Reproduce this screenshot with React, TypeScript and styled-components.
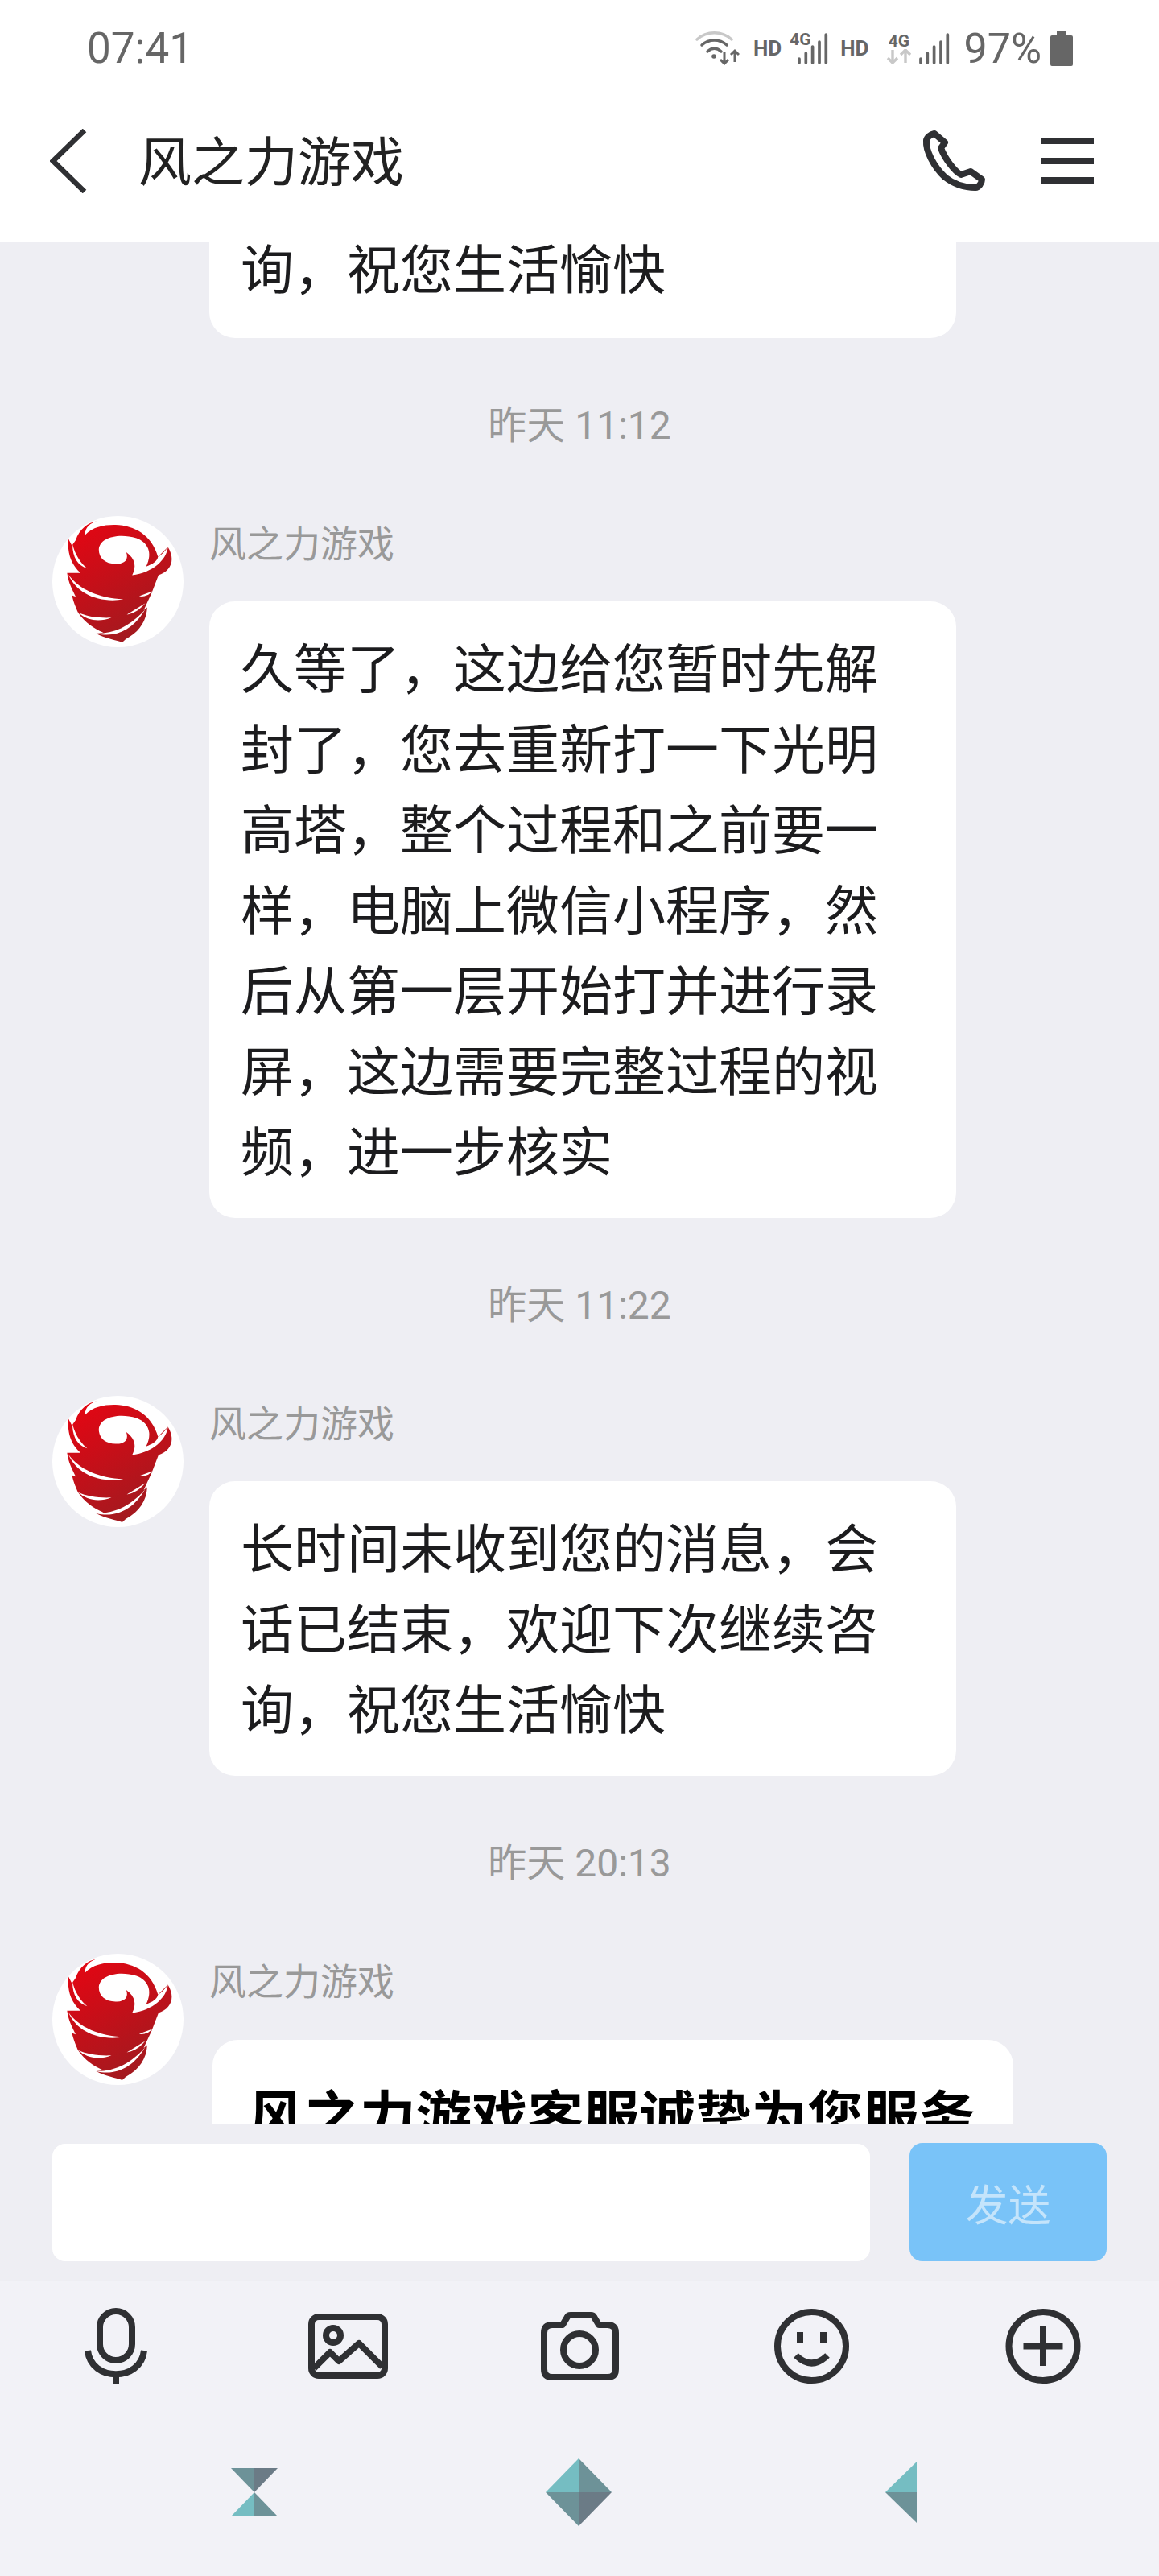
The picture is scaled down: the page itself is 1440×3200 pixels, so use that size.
import React from 'react';
import styled, { createGlobalStyle } from 'styled-components';

const FONT = `Roboto, "Noto Sans CJK SC", "Noto Sans", sans-serif`;
const ICON = '#2f3033';

const GlobalStyle = createGlobalStyle`
	html, body {
		margin: 0;
		padding: 0;
		background: #eeeef3;
	}
	* {
		box-sizing: border-box;
	}
`;

const Tornado = () => (
	<svg width="163" height="163" viewBox="75 60 488 488">
		<defs>
			<linearGradient id="swirl" gradientUnits="userSpaceOnUse" x1="170" y1="100" x2="420" y2="520">
				<stop offset="0" stopColor="#e30613" />
				<stop offset="1" stopColor="#9e1b20" />
			</linearGradient>
		</defs>
		<circle cx="319" cy="304" r="244" fill="#fff" />
		<path
			d="M245 78C205 85 175 110 162 150L148 170L135 145C130 200 145 240 180 272L130 272C135 310 150 335 162 360L148 355C155 385 165 405 170 418C195 455 230 480 265 493L238 497C270 515 310 520 335 530L348 518C400 490 425 450 428 400L415 410L445 345L470 280C515 265 535 225 505 175L468 212C445 130 380 95 310 93C270 92 225 100 197 130C195 105 215 85 245 78Z"
			fill="url(#swirl)"
		/>
		<g fill="#fff">
			<path d="M248 185C250 140 320 122 388 142C430 158 450 195 424 248C445 240 465 230 468 212C480 205 495 190 505 175C500 222 450 270 372 280C388 250 385 220 350 195C360 222 345 240 310 238C272 238 248 216 248 185Z" />
			<path d="M150 165C160 205 180 235 205 255C170 245 150 215 150 165Z" />
			<path d="M135 278C175 335 250 365 340 370C250 385 165 350 135 278Z" />
			<path d="M398 358L447 340C435 354 415 362 398 358Z" />
			<path d="M352 427L420 385C402 407 380 422 352 427Z" />
			<path d="M170 418C205 435 250 440 295 438C250 455 205 450 170 418Z" />
			<path d="M238 497C310 498 370 465 420 408C378 480 315 515 238 497Z" />
		</g>
	</svg>
);

const WifiIcon = () => (
	<svg width="55" height="42" viewBox="0 0 55 42" fill="none" strokeLinecap="round">
		<path d="M2 10C14 -1 33 -1 45 10" stroke="#c8c8c8" strokeWidth="3.5" />
		<path d="M8 17C17 9 30 9 39 17" stroke="#666" strokeWidth="3.5" />
		<path d="M15 25C20 20 27 20 32 25" stroke="#666" strokeWidth="3.5" />
		<circle cx="23" cy="31" r="2.8" fill="#666" />
		<path d="M36 26V40M31 35L36 40L41 35" stroke="#666" strokeWidth="3" strokeLinecap="butt" />
		<path d="M49 38V24M44 29L49 24L54 29" stroke="#666" strokeWidth="3" strokeLinecap="butt" />
	</svg>
);

const Bars = () => (
	<svg width="38" height="39" viewBox="0 0 38 39" stroke="#666" strokeWidth="3.7" strokeLinecap="round">
		<path d="M2 32V37M10.3 25V37M18.6 17V37M27 11V37M35.3 2V37" />
	</svg>
);

const ArrowPair = () => (
	<svg width="31" height="18" viewBox="0 0 31 18" fill="none" stroke="#c8c8c8" strokeWidth="3.4">
		<path d="M8 1V17M2 11L8 17L14 11" />
		<path d="M24 17V1M18 7L24 1L30 7" />
	</svg>
);

const BatteryIcon = () => (
	<svg width="28" height="43" viewBox="0 0 28 43">
		<path d="M8 0H20V5H26Q28 5 28 7V41Q28 43 26 43H2Q0 43 0 41V7Q0 5 2 5H8Z" fill="#666" />
	</svg>
);

const CallIcon = () => (
	<svg width="80" height="78" viewBox="0 0 80 78" fill="none" stroke={ICON} strokeWidth="8" strokeLinejoin="round">
		<path d="M15 5C10 6 5 10 5 14C4 26 14 46 28 59C38 67 52 72 66 72C70 72 74 66 74 62L60 52L48 56C40 52 28 36 23 23L28 16Z" />
	</svg>
);

const MicIcon = () => (
	<svg width="78" height="94" viewBox="0 0 78 94" fill="none" stroke={ICON} strokeWidth="8">
		<rect x="19" y="4" width="40" height="61" rx="20" />
		<path d="M4 53C8 92 70 92 74 53" />
		<path d="M39 80V94" />
	</svg>
);

const ImageIcon = () => (
	<svg width="99" height="81" viewBox="0 0 99 81" fill="none" stroke={ICON} strokeWidth="8">
		<rect x="4" y="4" width="91" height="73" rx="9" />
		<circle cx="31" cy="27" r="9" />
		<path d="M7 68L27 48L38 59L63 37L92 66" strokeLinejoin="round" />
	</svg>
);

const CameraIcon = () => (
	<svg width="97" height="85" viewBox="0 0 97 85" fill="none" stroke={ICON} strokeWidth="8" strokeLinejoin="round">
		<path d="M14 16H27L33 6Q34 4 37 4H62Q65 4 66 6L72 16H83Q93 16 93 26V71Q93 81 83 81H14Q4 81 4 71V26Q4 16 14 16Z" />
		<circle cx="48" cy="47" r="20" />
	</svg>
);

const SmileIcon = () => (
	<svg width="93" height="93" viewBox="0 0 93 93" fill="none" stroke={ICON} strokeWidth="8">
		<circle cx="46.5" cy="46.5" r="42.5" />
		<path d="M32 29V43M61 29V43" />
		<path d="M27 58Q46.5 77 66 58" />
	</svg>
);

const PlusIcon = () => (
	<svg width="94" height="93" viewBox="0 0 94 93" fill="none" stroke={ICON} strokeWidth="8">
		<circle cx="47" cy="46.5" r="42.5" />
		<path d="M47 22V71M22.5 46.5H71.5" />
	</svg>
);

const Hourglass = () => (
	<svg width="58" height="60" viewBox="0 0 58 60">
		<path d="M0 0H29V30Z" fill="#6d9298" />
		<path d="M58 0H29V30Z" fill="#6b7b86" />
		<path d="M0 60H29V30Z" fill="#75bdc2" />
		<path d="M58 60H29V30Z" fill="#6d9298" />
	</svg>
);

const Diamond = () => (
	<svg width="82" height="84" viewBox="0 0 82 84">
		<path d="M41 0V42H0Z" fill="#75bdc2" />
		<path d="M41 0V42H82Z" fill="#6d9298" />
		<path d="M41 84V42H0Z" fill="#6d9298" />
		<path d="M41 84V42H82Z" fill="#6b7b86" />
	</svg>
);

const HalfDiamond = () => (
	<svg width="39" height="76" viewBox="0 0 39 76">
		<path d="M39 0V38H0Z" fill="#75bdc2" />
		<path d="M39 76V38H0Z" fill="#6d9298" />
	</svg>
);

const Stamp: React.FC<{ time: string }> = ({ time }) => <TimeLabel>昨天 {time}</TimeLabel>;

const App: React.FC = () => (
	<Page>
		<GlobalStyle />
		<Top>
			<StatusBar>
				<Clock>07:41</Clock>
				<StatusIcons>
					<WifiIcon />
					<Hd $left={17}>HD</Hd>
					<Signal>
						<SmallG>4G</SmallG>
						<Bars />
					</Signal>
					<Hd $left={15}>HD</Hd>
					<NetStack>
						<SmallG>4G</SmallG>
						<ArrowPair />
					</NetStack>
					<Bars />
					<Percent>97%</Percent>
					<BatteryIcon />
				</StatusIcons>
			</StatusBar>
			<NavBar>
				<BackButton>
					<svg width="46" height="80" viewBox="0 0 46 80" fill="none" stroke={ICON} strokeWidth="6.5">
						<path d="M43 2L4 40L43 78" />
					</svg>
				</BackButton>
				<Title>风之力游戏</Title>
				<NavActions>
					<CallIcon />
					<Burger>
						<span />
						<span />
						<span />
					</Burger>
				</NavActions>
			</NavBar>
		</Top>

		<Chat>
			<Scroller>
				<ClippedRow>
					<Bubble $clipped>询，祝您生活愉快</Bubble>
				</ClippedRow>
				<Stamp time="11:12" />
				<Row>
					<Tornado />
					<Message>
						<Name>风之力游戏</Name>
						<Bubble>
							久等了，这边给您暂时先解封了，您去重新打一下光明高塔，整个过程和之前要一样，电脑上微信小程序，然后从第一层开始打并进行录屏，这边需要完整过程的视频，进一步核实
						</Bubble>
					</Message>
				</Row>
				<Stamp time="11:22" />
				<Row>
					<Tornado />
					<Message>
						<Name>风之力游戏</Name>
						<Bubble>长时间未收到您的消息，会话已结束，欢迎下次继续咨询，祝您生活愉快</Bubble>
					</Message>
				</Row>
				<Stamp time="20:13" />
				<Row>
					<Tornado />
					<Message>
						<Name>风之力游戏</Name>
						<Card>
							<CardTitle>风之力游戏客服诚挚为您服务</CardTitle>
						</Card>
					</Message>
				</Row>
			</Scroller>
		</Chat>

		<Composer>
			<Field />
			<SendButton>发送</SendButton>
		</Composer>

		<Tools>
			<MicIcon />
			<ImageIcon />
			<CameraIcon />
			<SmileIcon />
			<PlusIcon />
		</Tools>

		<SystemNav>
			<Hourglass />
			<CenterKey>
				<Diamond />
			</CenterKey>
			<HalfDiamond />
		</SystemNav>
	</Page>
);

export default App;

/**
 * Styled components
 */

const Page = styled.div`
	width: 1440px;
	height: 3200px;
	display: flex;
	flex-direction: column;
	overflow: hidden;
	background: #eeeef3;
	font-family: ${FONT};
`;

const Top = styled.header`
	height: 301px;
	flex: none;
	background: #fff;
`;

const StatusBar = styled.div`
	height: 120px;
	padding: 0 107px 0 108px;
	display: flex;
	align-items: center;
	justify-content: space-between;
`;

const Clock = styled.span`
	font-size: 53px;
	color: #666;
`;

const StatusIcons = styled.div`
	display: flex;
	align-items: center;
`;

const Hd = styled.span<{ $left: number }>`
	font-size: 26px;
	font-weight: 700;
	color: #666;
	margin-left: ${p => p.$left}px;
`;

const Signal = styled.span`
	position: relative;
	display: block;
	width: 48px;
	height: 39px;
	margin-left: 10px;

	svg {
		position: absolute;
		right: 0;
		bottom: 0;
	}

	span {
		position: absolute;
		left: 0;
		top: -2px;
	}
`;

const NetStack = styled.span`
	display: flex;
	flex-direction: column;
	align-items: center;
	margin: 0 10px 0 22px;
`;

const SmallG = styled.span`
	font-size: 21px;
	line-height: 20px;
	font-weight: 700;
	color: #666;
`;

const Percent = styled.span`
	font-size: 52px;
	color: #666;
	margin: 0 11px 0 17px;
`;

const NavBar = styled.nav`
	height: 181px;
	padding: 0 81px 22px 62px;
	display: flex;
	align-items: center;
`;

const BackButton = styled.span`
	display: flex;
	margin-right: 64px;
`;

const Title = styled.h1`
	margin: 0;
	padding-bottom: 7px;
	font-size: 66px;
	font-weight: 400;
	color: #222;
`;

const NavActions = styled.div`
	margin-left: auto;
	display: flex;
	align-items: center;
	gap: 67px;
`;

const Burger = styled.div`
	width: 66px;
	display: flex;
	flex-direction: column;
	gap: 16.5px;

	span {
		height: 8px;
		background: ${ICON};
	}
`;

const Chat = styled.main`
	height: 2337px;
	flex: none;
	overflow: hidden;
`;

const Scroller = styled.div`
	margin-top: -14px;
	padding-left: 65px;
	display: flex;
	flex-direction: column;
`;

const Row = styled.section`
	display: flex;
	gap: 32px;

	& > svg {
		flex: none;
	}
`;

const ClippedRow = styled.section`
	padding-left: 195px;
`;

const TimeLabel = styled.div`
	margin-left: -65px;
	height: 221px;
	padding-bottom: 14px;
	display: flex;
	align-items: center;
	justify-content: center;
	font-size: 48px;
	color: #999;
`;

const Message = styled.div`
	display: flex;
	flex-direction: column;
`;

const Name = styled.div`
	height: 106px;
	padding-top: 12px;
	font-size: 46px;
	line-height: 46px;
	color: #999;
`;

const Bubble = styled.div<{ $clipped?: boolean }>`
	width: 928px;
	padding: ${p => (p.$clipped ? 0 : 36)}px 40px ${p => (p.$clipped ? 33 : 30)}px 39px;
	border-radius: ${p => (p.$clipped ? '0 0 32px 32px' : '32px')};
	background: #fff;
	font-size: 66px;
	line-height: 100px;
	color: #1c1c1e;
`;

const Card = styled.div`
	width: 995px;
	height: 300px;
	margin: 1px 0 0 4px;
	padding: 60px 44px 0;
	border-radius: 32px;
	background: #fff;
`;

const CardTitle = styled.div`
	font-size: 69.5px;
	line-height: 76px;
	font-weight: 700;
	color: #000;
	white-space: nowrap;
`;

const Composer = styled.div`
	height: 195px;
	flex: none;
	padding: 24px 65px 0;
	display: flex;
	align-items: flex-start;
	gap: 49px;
`;

const Field = styled.div`
	flex: 1;
	height: 146px;
	margin-top: 1px;
	border-radius: 16px;
	background: #fff;
`;

const SendButton = styled.div`
	width: 245px;
	height: 147px;
	border-radius: 16px;
	background: #79c3f8;
	color: #c4e4fb;
	font-size: 53px;
	display: flex;
	align-items: center;
	justify-content: center;
`;

const Tools = styled.div`
	height: 190px;
	flex: none;
	padding-top: 34px;
	background: #f2f2f7;
	display: grid;
	grid-template-columns: repeat(5, 288px);
	grid-template-rows: 94px;
	align-items: center;
	justify-items: center;
`;

const SystemNav = styled.div`
	flex: 1;
	padding: 0 301px 32px 287px;
	background: #f2f2f7;
	display: flex;
	align-items: center;
	justify-content: space-between;
`;

const CenterKey = styled.span`
	display: flex;
	margin-right: 8px;
`;
